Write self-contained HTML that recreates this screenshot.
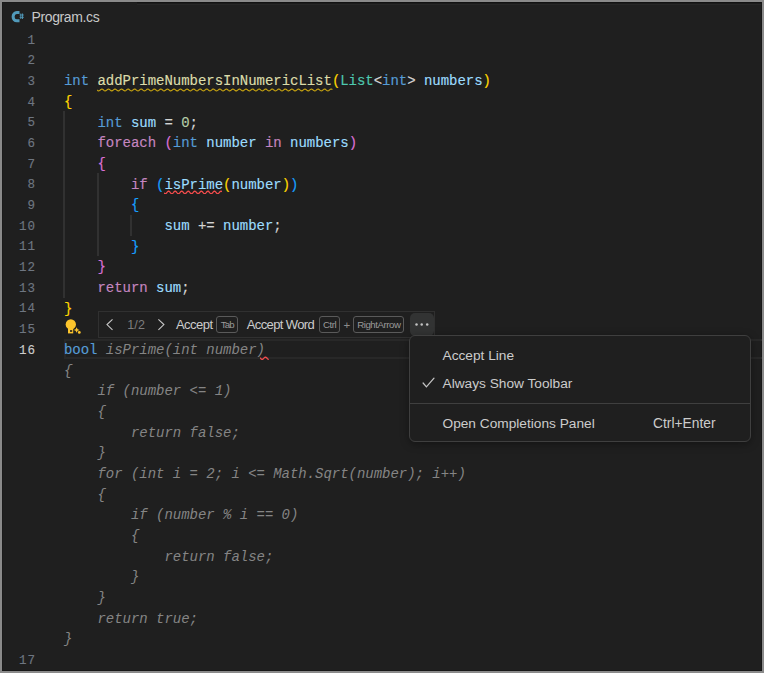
<!DOCTYPE html>
<html><head><meta charset="utf-8"><style>
html,body{margin:0;padding:0;}
body{width:764px;height:673px;background:#8a8a8a;position:relative;overflow:hidden;}
#ed{position:absolute;left:2px;top:2px;width:760px;height:669px;background:#1f1f1f;overflow:hidden;}
.abs{position:absolute;}
.ui{font-family:"Liberation Sans",sans-serif;position:absolute;white-space:pre;}
#title{left:31.5px;top:7.3px;font-size:14px;letter-spacing:-0.38px;color:#c8c8c8;line-height:20px;}
.row,.ln{-webkit-text-stroke:0.15px;position:absolute;font-family:"Liberation Mono",monospace;font-size:14px;line-height:20.667px;height:20.667px;white-space:pre;letter-spacing:-0.0314px;}
.row{left:64.0px;}
.ln{left:0;width:35.8px;text-align:right;color:#6e7681;letter-spacing:0.87px;font-size:12.5px;margin-top:0.5px;}
.ln.cur{color:#cccccc;}
.k{color:#569cd6}.c{color:#c586c0}.f{color:#dcdcaa}.t{color:#4ec9b0}.v{color:#9cdcfe}.n{color:#b5cea8}.p{color:#d4d4d4}
.b1{color:#ffd700}.b2{color:#da70d6}.b3{color:#179fff}
.g{color:#858585;font-style:italic;-webkit-text-stroke:0}
.guide{position:absolute;width:2px;background:#313131;}
#curline{position:absolute;left:63.5px;top:339px;width:698.5px;height:20px;border:2px solid #282828;border-right:0;box-sizing:border-box;}
#tb{position:absolute;left:97.5px;top:311px;width:337px;height:27px;border:1px solid #303030;box-sizing:border-box;background:#1f1f1f;}
.tbt{font-size:13px;color:#cccccc;line-height:16px;}
.kbd{position:absolute;box-sizing:border-box;border:1px solid #5a5a5a;border-radius:3px;height:17px;top:316px;}
.kbdt{font-size:9.7px;color:#9a9a9a;line-height:12px;}
#more{position:absolute;left:410px;top:313px;width:24px;height:22.5px;background:#323333;border-radius:5px;}
.dot{position:absolute;width:2.6px;height:2.6px;border-radius:50%;background:#cccccc;top:323.2px;}
#menu{position:absolute;left:409px;top:335px;width:342px;height:107px;box-sizing:border-box;border:1px solid #3f3f3f;border-radius:6px;background:#1f1f1f;box-shadow:0 2px 8px rgba(0,0,0,0.36);}
.mt{font-size:13.7px;color:#cccccc;line-height:16px;}
</style></head><body>
<div id="ed"></div><div class="abs" style="left:2px;top:2px;width:135px;height:1px;background:#1b1b1b"></div><div class="abs" style="left:137px;top:2px;width:625px;height:1px;background:#121212"></div><div class="abs" style="left:137px;top:3px;width:625px;height:1px;background:#1b1b1b"></div><div class="abs" style="left:137px;top:4px;width:625px;height:1px;background:#262626"></div><div class="abs" style="left:2px;top:2px;width:1px;height:669px;background:#1a1a1a"></div><div class="abs" style="left:761px;top:2px;width:1px;height:669px;background:#171717"></div><div class="abs" style="left:2px;top:670px;width:760px;height:1px;background:#171717"></div>
<div id="curline"></div>
<div class="guide" style="left:63.0px;top:111.17px;height:186.60px"></div><div class="guide" style="left:97.0px;top:173.17px;height:83.27px"></div><div class="guide" style="left:130.0px;top:214.50px;height:21.27px"></div>
<div class="ln" style="top:30.00px">1</div>
<div class="ln" style="top:50.67px">2</div>
<div class="ln" style="top:71.33px">3</div>
<div class="ln" style="top:92.00px">4</div>
<div class="ln" style="top:112.67px">5</div>
<div class="ln" style="top:133.34px">6</div>
<div class="ln" style="top:154.00px">7</div>
<div class="ln" style="top:174.67px">8</div>
<div class="ln" style="top:195.34px">9</div>
<div class="ln" style="top:216.00px">10</div>
<div class="ln" style="top:236.67px">11</div>
<div class="ln" style="top:257.34px">12</div>
<div class="ln" style="top:278.00px">13</div>
<div class="ln" style="top:298.67px">14</div>
<div class="ln" style="top:319.34px">15</div>
<div class="ln cur" style="top:340.00px">16</div>
<div class="ln" style="top:650.01px">17</div>
<div class="row" style="top:71.33px"><span class="k">int</span><span class="p"> </span><span class="f">addPrimeNumbersInNumericList</span><span class="b1">(</span><span class="t">List</span><span class="p">&lt;</span><span class="k">int</span><span class="p">&gt; </span><span class="v">numbers</span><span class="b1">)</span></div>
<div class="row" style="top:92.00px"><span class="b1">{</span></div>
<div class="row" style="top:112.67px"><span class="p">    </span><span class="k">int</span><span class="p"> </span><span class="v">sum</span><span class="p"> = </span><span class="n">0</span><span class="p">;</span></div>
<div class="row" style="top:133.34px"><span class="p">    </span><span class="c">foreach</span><span class="p"> </span><span class="b2">(</span><span class="k">int</span><span class="p"> </span><span class="v">number</span><span class="p"> </span><span class="c">in</span><span class="p"> </span><span class="v">numbers</span><span class="b2">)</span></div>
<div class="row" style="top:154.00px"><span class="p">    </span><span class="b2">{</span></div>
<div class="row" style="top:174.67px"><span class="p">        </span><span class="c">if</span><span class="p"> </span><span class="b3">(</span><span class="v">isPrime</span><span class="b1">(</span><span class="v">number</span><span class="b1">)</span><span class="b3">)</span></div>
<div class="row" style="top:195.34px"><span class="p">        </span><span class="b3">{</span></div>
<div class="row" style="top:216.00px"><span class="p">            </span><span class="v">sum</span><span class="p"> += </span><span class="v">number</span><span class="p">;</span></div>
<div class="row" style="top:236.67px"><span class="p">        </span><span class="b3">}</span></div>
<div class="row" style="top:257.34px"><span class="p">    </span><span class="b2">}</span></div>
<div class="row" style="top:278.00px"><span class="p">    </span><span class="c">return</span><span class="p"> </span><span class="v">sum</span><span class="p">;</span></div>
<div class="row" style="top:298.67px"><span class="b1">}</span></div>
<div class="row" style="top:340.00px"><span class="k">bool</span><span class="g"> isPrime(int number)</span></div>
<div class="row" style="top:360.67px"><span class="g">{</span></div>
<div class="row" style="top:381.34px"><span class="g">    if (number &lt;= 1)</span></div>
<div class="row" style="top:402.01px"><span class="g">    {</span></div>
<div class="row" style="top:422.67px"><span class="g">        return false;</span></div>
<div class="row" style="top:443.34px"><span class="g">    }</span></div>
<div class="row" style="top:464.01px"><span class="g">    for (int i = 2; i &lt;= Math.Sqrt(number); i++)</span></div>
<div class="row" style="top:484.67px"><span class="g">    {</span></div>
<div class="row" style="top:505.34px"><span class="g">        if (number % i == 0)</span></div>
<div class="row" style="top:526.01px"><span class="g">        {</span></div>
<div class="row" style="top:546.68px"><span class="g">            return false;</span></div>
<div class="row" style="top:567.34px"><span class="g">        }</span></div>
<div class="row" style="top:588.01px"><span class="g">    }</span></div>
<div class="row" style="top:608.68px"><span class="g">    return true;</span></div>
<div class="row" style="top:629.34px"><span class="g">}</span></div>
<svg class="abs" style="left:97.30px;top:87.83px" width="235.4" height="3.9"><polyline points="0.00,1.99 0.50,2.40 1.00,2.72 1.50,2.87 2.00,2.82 2.50,2.58 3.00,2.20 3.50,1.77 4.00,1.39 4.50,1.14 5.00,1.08 5.50,1.22 6.00,1.53 6.50,1.94 7.00,2.36 7.50,2.69 8.00,2.86 8.50,2.83 9.00,2.61 9.50,2.24 10.00,1.82 10.50,1.43 11.00,1.16 11.50,1.08 11.99,1.20 12.49,1.49 12.99,1.89 13.49,2.32 13.99,2.66 14.49,2.85 14.99,2.85 15.49,2.64 15.99,2.29 16.49,1.86 16.99,1.46 17.49,1.18 17.99,1.08 18.49,1.17 18.99,1.45 19.49,1.85 19.99,2.27 20.49,2.63 20.99,2.84 21.49,2.86 21.99,2.67 22.49,2.33 22.99,1.91 23.49,1.50 23.99,1.20 24.49,1.08 24.99,1.15 25.49,1.42 25.99,1.80 26.49,2.23 26.99,2.60 27.49,2.83 27.99,2.86 28.49,2.70 28.99,2.37 29.49,1.95 29.99,1.54 30.49,1.23 30.99,1.08 31.49,1.14 31.99,1.38 32.49,1.76 32.99,2.19 33.49,2.57 33.99,2.81 34.49,2.87 34.99,2.73 35.48,2.41 35.98,2.00 36.48,1.58 36.98,1.25 37.48,1.09 37.98,1.12 38.48,1.35 38.98,1.72 39.48,2.14 39.98,2.53 40.48,2.80 40.98,2.87 41.48,2.75 41.98,2.45 42.48,2.04 42.98,1.62 43.48,1.28 43.98,1.09 44.48,1.11 44.98,1.32 45.48,1.67 45.98,2.10 46.48,2.50 46.98,2.78 47.48,2.87 47.98,2.77 48.48,2.49 48.98,2.09 49.48,1.67 49.98,1.31 50.48,1.11 50.98,1.10 51.48,1.29 51.98,1.63 52.48,2.05 52.98,2.46 53.48,2.75 53.98,2.87 54.48,2.79 54.98,2.53 55.48,2.13 55.98,1.71 56.48,1.34 56.98,1.12 57.48,1.09 57.98,1.26 58.48,1.59 58.97,2.01 59.47,2.42 59.97,2.73 60.47,2.87 60.97,2.81 61.47,2.56 61.97,2.18 62.47,1.75 62.97,1.37 63.47,1.13 63.97,1.08 64.47,1.23 64.97,1.55 65.47,1.96 65.97,2.38 66.47,2.70 66.97,2.87 67.47,2.83 67.97,2.59 68.47,2.22 68.97,1.80 69.47,1.41 69.97,1.15 70.47,1.08 70.97,1.21 71.47,1.51 71.97,1.92 72.47,2.34 72.97,2.68 73.47,2.86 73.97,2.84 74.47,2.63 74.97,2.27 75.47,1.84 75.97,1.45 76.47,1.17 76.97,1.08 77.47,1.18 77.97,1.47 78.47,1.87 78.97,2.30 79.47,2.65 79.97,2.85 80.47,2.85 80.97,2.66 81.47,2.31 81.97,1.89 82.46,1.48 82.96,1.19 83.46,1.08 83.96,1.16 84.46,1.43 84.96,1.83 85.46,2.25 85.96,2.62 86.46,2.84 86.96,2.86 87.46,2.69 87.96,2.35 88.46,1.93 88.96,1.52 89.46,1.21 89.96,1.08 90.46,1.14 90.96,1.40 91.46,1.78 91.96,2.21 92.46,2.58 92.96,2.82 93.46,2.87 93.96,2.71 94.46,2.39 94.96,1.98 95.46,1.56 95.96,1.24 96.46,1.08 96.96,1.13 97.46,1.36 97.96,1.74 98.46,2.16 98.96,2.55 99.46,2.80 99.96,2.87 100.46,2.74 100.96,2.43 101.46,2.02 101.96,1.60 102.46,1.27 102.96,1.09 103.46,1.11 103.96,1.33 104.46,1.69 104.96,2.12 105.46,2.51 105.95,2.79 106.45,2.87 106.95,2.76 107.45,2.47 107.95,2.07 108.45,1.64 108.95,1.30 109.45,1.10 109.95,1.10 110.45,1.30 110.95,1.65 111.45,2.07 111.95,2.48 112.45,2.76 112.95,2.87 113.45,2.78 113.95,2.51 114.45,2.11 114.95,1.69 115.45,1.33 115.95,1.11 116.45,1.09 116.95,1.27 117.45,1.61 117.95,2.03 118.45,2.44 118.95,2.74 119.45,2.87 119.95,2.80 120.45,2.54 120.95,2.16 121.45,1.73 121.95,1.36 122.45,1.13 122.95,1.08 123.45,1.24 123.95,1.57 124.45,1.98 124.95,2.40 125.45,2.72 125.95,2.87 126.45,2.82 126.95,2.58 127.45,2.20 127.95,1.78 128.45,1.39 128.95,1.14 129.45,1.08 129.94,1.22 130.44,1.53 130.94,1.94 131.44,2.36 131.94,2.69 132.44,2.86 132.94,2.83 133.44,2.61 133.94,2.25 134.44,1.82 134.94,1.43 135.44,1.16 135.94,1.08 136.44,1.19 136.94,1.49 137.44,1.89 137.94,2.32 138.44,2.66 138.94,2.85 139.44,2.85 139.94,2.64 140.44,2.29 140.94,1.87 141.44,1.47 141.94,1.18 142.44,1.08 142.94,1.17 143.44,1.45 143.94,1.85 144.44,2.27 144.94,2.63 145.44,2.84 145.94,2.86 146.44,2.67 146.94,2.33 147.44,1.91 147.94,1.50 148.44,1.20 148.94,1.08 149.44,1.15 149.94,1.41 150.44,1.80 150.94,2.23 151.44,2.60 151.94,2.83 152.44,2.86 152.94,2.70 153.43,2.37 153.93,1.96 154.43,1.54 154.93,1.23 155.43,1.08 155.93,1.14 156.43,1.38 156.93,1.76 157.43,2.19 157.93,2.57 158.43,2.81 158.93,2.87 159.43,2.73 159.93,2.41 160.43,2.00 160.93,1.58 161.43,1.25 161.93,1.09 162.43,1.12 162.93,1.35 163.43,1.71 163.93,2.14 164.43,2.53 164.93,2.79 165.43,2.87 165.93,2.75 166.43,2.45 166.93,2.05 167.43,1.63 167.93,1.28 168.43,1.10 168.93,1.11 169.43,1.31 169.93,1.67 170.43,2.10 170.93,2.49 171.43,2.77 171.93,2.87 172.43,2.77 172.93,2.49 173.43,2.09 173.93,1.67 174.43,1.31 174.93,1.11 175.43,1.10 175.93,1.28 176.43,1.63 176.92,2.05 177.42,2.46 177.92,2.75 178.42,2.87 178.92,2.79 179.42,2.53 179.92,2.14 180.42,1.71 180.92,1.34 181.42,1.12 181.92,1.09 182.42,1.26 182.92,1.59 183.42,2.00 183.92,2.42 184.42,2.73 184.92,2.87 185.42,2.81 185.92,2.56 186.42,2.18 186.92,1.75 187.42,1.38 187.92,1.13 188.42,1.08 188.92,1.23 189.42,1.55 189.92,1.96 190.42,2.38 190.92,2.70 191.42,2.86 191.92,2.83 192.42,2.60 192.92,2.23 193.42,1.80 193.92,1.41 194.42,1.15 194.92,1.08 195.42,1.20 195.92,1.51 196.42,1.91 196.92,2.33 197.42,2.67 197.92,2.86 198.42,2.84 198.92,2.63 199.42,2.27 199.92,1.84 200.41,1.45 200.91,1.17 201.41,1.08 201.91,1.18 202.41,1.47 202.91,1.87 203.41,2.29 203.91,2.65 204.41,2.85 204.91,2.85 205.41,2.66 205.91,2.31 206.41,1.89 206.91,1.49 207.41,1.19 207.91,1.08 208.41,1.16 208.91,1.43 209.41,1.82 209.91,2.25 210.41,2.61 210.91,2.83 211.41,2.86 211.91,2.69 212.41,2.35 212.91,1.93 213.41,1.52 213.91,1.22 214.41,1.08 214.91,1.14 215.41,1.40 215.91,1.78 216.41,2.21 216.91,2.58 217.41,2.82 217.91,2.87 218.41,2.71 218.91,2.39 219.41,1.98 219.91,1.56 220.41,1.24 220.91,1.08 221.41,1.13 221.91,1.36 222.41,1.73 222.91,2.16 223.41,2.55 223.90,2.80 224.40,2.87 224.90,2.74 225.40,2.43 225.90,2.03 226.40,1.61 226.90,1.27 227.40,1.09 227.90,1.11 228.40,1.33 228.90,1.69 229.40,2.12 229.90,2.51 230.40,2.78 230.90,2.87 231.40,2.76 231.90,2.47 232.40,2.07 232.90,1.65 233.40,1.30 233.90,1.10 234.40,1.10 234.90,1.30 235.40,1.65" fill="none" stroke="#c4a112" stroke-width="1.15" stroke-linejoin="round"/></svg><svg class="abs" style="left:164.00px;top:189.55px" width="58.0" height="4.9"><polyline points="0.00,2.83 0.50,3.36 0.99,3.68 1.49,3.73 1.98,3.50 2.48,3.03 2.97,2.44 3.47,1.84 3.97,1.38 4.46,1.16 4.96,1.23 5.45,1.56 5.95,2.09 6.44,2.71 6.94,3.26 7.44,3.64 7.93,3.75 8.43,3.57 8.92,3.15 9.42,2.57 9.91,1.96 10.41,1.46 10.91,1.19 11.40,1.19 11.90,1.47 12.39,1.97 12.89,2.58 13.38,3.15 13.88,3.58 14.38,3.75 14.87,3.63 15.37,3.25 15.86,2.70 16.36,2.09 16.85,1.55 17.35,1.22 17.85,1.16 18.34,1.39 18.84,1.85 19.33,2.44 19.83,3.04 20.32,3.51 20.82,3.74 21.32,3.68 21.81,3.35 22.31,2.82 22.80,2.21 23.30,1.65 23.79,1.27 24.29,1.15 24.79,1.32 25.28,1.74 25.78,2.31 26.27,2.92 26.77,3.42 27.26,3.71 27.76,3.72 28.26,3.44 28.75,2.95 29.25,2.34 29.74,1.76 30.24,1.33 30.74,1.15 31.23,1.26 31.73,1.63 32.22,2.18 32.72,2.80 33.21,3.33 33.71,3.67 34.21,3.74 34.70,3.52 35.20,3.07 35.69,2.48 36.19,1.88 36.68,1.41 37.18,1.17 37.68,1.21 38.17,1.53 38.67,2.06 39.16,2.67 39.66,3.23 40.15,3.62 40.65,3.75 41.15,3.59 41.64,3.18 42.14,2.61 42.63,2.00 43.13,1.49 43.62,1.20 44.12,1.18 44.62,1.44 45.11,1.93 45.61,2.54 46.10,3.12 46.60,3.56 47.09,3.75 47.59,3.65 48.09,3.28 48.58,2.74 49.08,2.12 49.57,1.58 50.07,1.24 50.56,1.16 51.06,1.37 51.56,1.82 52.05,2.40 52.55,3.00 53.04,3.48 53.54,3.73 54.03,3.69 54.53,3.38 55.03,2.86 55.52,2.25 56.02,1.69 56.51,1.29 57.01,1.15 57.50,1.30 58.00,1.70" fill="none" stroke="#f14c4c" stroke-width="1.30" stroke-linejoin="round"/></svg><svg class="abs" style="left:260.20px;top:355.52px" width="8.8" height="4.5"><polyline points="0.00,1.78 0.49,2.28 0.98,2.77 1.47,3.16 1.96,3.36 2.44,3.32 2.93,3.06 3.42,2.63 3.91,2.12 4.40,1.64 4.89,1.30 5.38,1.18 5.87,1.28 6.36,1.61 6.84,2.07 7.33,2.58 7.82,3.03 8.31,3.31 8.80,3.37" fill="none" stroke="#f14c4c" stroke-width="1.35" stroke-linejoin="round"/></svg>
<svg class="abs" style="left:9px;top:9px" width="18" height="16" viewBox="0 0 18 16">
<path d="M10.5 3.6 H7.8 C5.7 3.6 4.1 5.3 4.1 7.7 C4.1 10.1 5.7 11.8 7.8 11.8 H10.5" fill="none" stroke="#519aba" stroke-width="3"/>
<path d="M11.8 4.5v5.5M13.5 4.5v5.5M10.6 6h4.2M10.6 8.3h4.2" stroke="#519aba" stroke-width="0.9"/>
</svg>
<div id="title" class="ui">Program.cs</div>
<div id="tb"></div>
<svg class="abs" style="left:104px;top:318px" width="12" height="14" viewBox="0 0 12 14"><path d="M8.5 1.4 L3 6.6 L8.5 11.8" fill="none" stroke="#c8c8c8" stroke-width="1.1"/></svg>
<div class="ui tbt" style="left:127.3px;top:316.8px;color:#7d7d7d;font-size:12.5px;letter-spacing:0.1px">1/2</div>
<svg class="abs" style="left:155px;top:318px" width="12" height="14" viewBox="0 0 12 14"><path d="M3.4 1.4 L8.9 6.6 L3.4 11.8" fill="none" stroke="#c8c8c8" stroke-width="1.1"/></svg>
<div class="ui tbt" style="left:176px;top:316.8px;letter-spacing:-0.55px">Accept</div>
<div class="kbd" style="left:216px;width:22px"></div>
<div class="ui kbdt" style="left:220.8px;top:318.5px;letter-spacing:-0.9px">Tab</div>
<div class="ui tbt" style="left:246.8px;top:317px;letter-spacing:-0.62px">Accept Word</div>
<div class="kbd" style="left:319px;width:21.2px"></div>
<div class="ui kbdt" style="left:323px;top:318.5px;letter-spacing:-0.45px">Ctrl</div>
<div class="ui tbt" style="left:343.5px;top:317px;color:#8b8b8b;font-size:11.5px">+</div>
<div class="kbd" style="left:353.2px;width:50.6px"></div>
<div class="ui kbdt" style="left:357.2px;top:318.5px;letter-spacing:-0.46px">RightArrow</div>
<div id="more"></div>
<svg class="abs" style="left:410px;top:314.3px" width="24" height="20" viewBox="0 0 24 20"><circle cx="6.5" cy="10.4" r="1.25" fill="#c4c4c4"/><circle cx="11.7" cy="10.4" r="1.25" fill="#c4c4c4"/><circle cx="17.2" cy="10.4" r="1.25" fill="#c4c4c4"/></svg>
<svg class="abs" style="left:64px;top:317px" width="18" height="18" viewBox="0 0 18 18">
<circle cx="6.8" cy="7.4" r="5.15" fill="#fcc42c"/>
<path d="M4 10 h5.2 v6.4 h-5.2z" fill="#fcc42c"/>
<path d="M6 13.2 h2.2 v1.6 h-2.2z" fill="#1f1f1f"/>
<path d="M12.6 10.2 L13.6 12.3 L15.6 13 L13.6 13.7 L12.6 15.8 L11.6 13.7 L9.6 13 L11.6 12.3z" fill="#fcc42c"/>
<circle cx="15.3" cy="15.4" r="1.4" fill="#fcc42c"/>
</svg>
<div id="menu"></div>
<div class="ui mt" style="left:442.5px;top:348.2px">Accept Line</div>
<svg class="abs" style="left:421px;top:377px" width="15" height="13" viewBox="0 0 15 13"><path d="M2.1 6.0 L5.4 9.9 L13 1.1" fill="none" stroke="#c4c4c4" stroke-width="1.25" stroke-linecap="round"/></svg>
<div class="ui mt" style="left:442.5px;top:375.5px">Always Show Toolbar</div>
<div class="abs" style="left:410px;top:403px;width:340px;height:1px;background:#3f3f3f"></div>
<div class="ui mt" style="left:442.5px;top:415.6px">Open Completions Panel</div>
<div class="ui mt" style="left:653px;top:416.3px;font-size:13.8px">Ctrl+Enter</div>
</body></html>
